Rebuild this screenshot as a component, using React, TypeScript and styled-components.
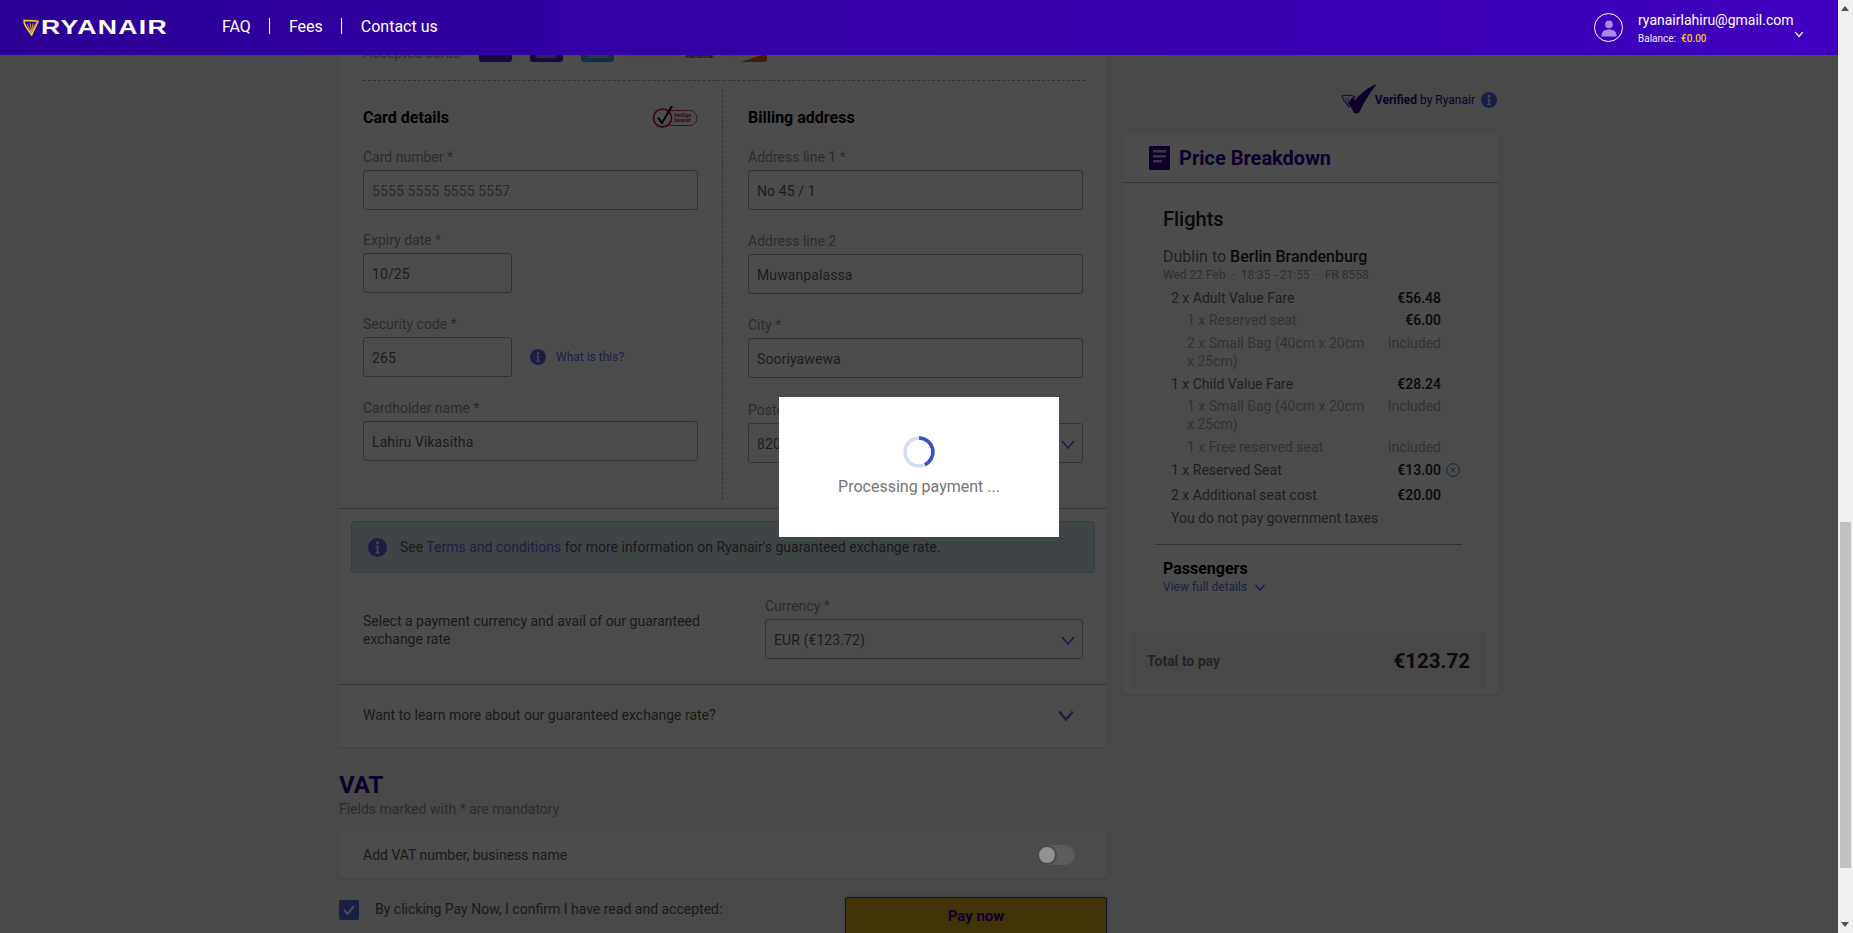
import React from "react";
import styled, { createGlobalStyle } from "styled-components";

const Global = createGlobalStyle`
  html, body { margin: 0; padding: 0; height: 100%; overflow: hidden; }
  body { font-family: Roboto, "Liberation Sans", sans-serif; font-size: 14px; color: #333; }
  * { box-sizing: border-box; }
`;

const BLUE = "#5568e0";
const TITLE = "#300090";

const Shell = styled.div`display: flex; width: 1853px; height: 933px; overflow: hidden;`;
const Viewport = styled.div`position: relative; flex: 1; min-width: 0; overflow: hidden; background: #f4f4f4;`;

const ScrollTrack = styled.div`width: 15px; height: 933px; background: #f1f1f1; position: relative; flex: none;`;
const ScrollArrow = styled.div<{ $down?: boolean }>`
  position: absolute; left: 3px; ${(p) => (p.$down ? "bottom: 6px;" : "top: 6px;")}
  width: 0; height: 0; border-left: 4.5px solid transparent; border-right: 4.5px solid transparent;
  ${(p) => (p.$down ? "border-top: 5px solid #505050;" : "border-bottom: 5px solid #505050;")}
`;
const ScrollThumb = styled.div`position: absolute; left: 2px; top: 522px; width: 11px; height: 346px; background: #c1c1c1;`;

const Header = styled.header`
  position: absolute; top: 0; left: 0; right: 0; height: 55px; z-index: 3;
  display: flex; align-items: center; color: #fff; padding-left: 23px;
  background: linear-gradient(90deg, #2c0096 0%, #3f00bf 100%);
`;
const Logo = styled.div`display: flex; align-items: center; gap: 2px; width: 199px; margin-top: -1px;`;
const LogoWord = styled.span`
  font-family: "Liberation Sans", sans-serif; font-weight: 700; font-size: 20px; letter-spacing: 1px; line-height: 20px; transform: scaleX(1.33); transform-origin: left center;
`;
const Nav = styled.nav`display: flex; align-items: center; margin-top: -3px;`;
const NavItem = styled.a`font-size: 16px; line-height: 17px; color: #fff;`;
const NavSep = styled.span`width: 1px; height: 16px; background: #fff; margin: 0 18.500px;`;
const User = styled.div`margin-left: auto; margin-right: 34px; display: flex; align-items: center; position: relative; width: 210px;`;
const Avatar = styled.div`width: 29px; height: 29px; border-radius: 50%; border: 1px solid #fff; display: flex; align-items: center; justify-content: center; margin-right: 15px; flex: none; overflow: hidden;`;
const UserText = styled.div`display: flex; flex-direction: column;`;
const Email = styled.div`font-size: 14px; line-height: 18px;`;
const Balance = styled.div`font-size: 10px; line-height: 12px; margin-top: 4px; color: #f2eaff;`;
const BalanceValue = styled.span`color: #f1c933; font-weight: 500; margin-left: 5px;`;
const UserChevron = styled.span`position: absolute; right: 0; top: 18px; display: flex;`;

const Columns = styled.div`display: flex; align-items: flex-start; padding: 40px 0 0 339px; gap: 16px;`;
const Main = styled.main`width: 768px; flex: none;`;
const Side = styled.aside`width: 376px; flex: none;`;

const Card = styled.section`background: #fff; box-shadow: 0 1px 2px rgba(0,0,0,.1);`;
const CardTop = styled(Card)`margin-top: -40px; padding-top: 40px;`;
const Accepted = styled.div`display: flex; align-items: center; height: 22px; padding-left: 24px;`;
const AcceptedLabel = styled.span`width: 116px; color: #999; font-size: 14px; margin-top: 3px;`;
const Chips = styled.div`display: flex; gap: 18px;`;
const Chip = styled.div<{ $bg: string }>`width: 33px; height: 22px; border-radius: 3px; background: ${(p) => p.$bg}; overflow: hidden; position: relative; box-shadow: 0 0 0 1px rgba(0,0,0,.03);`;
const ChipMark = styled.span<{ $c: string; $bottom?: number; $size?: number }>`position: absolute; left: 0; right: 0; bottom: ${(p) => p.$bottom ?? 3}px; text-align: center; font-size: ${(p) => p.$size ?? 5}px; font-weight: 500; line-height: 6px; color: ${(p) => p.$c};`;
const ChipCorner = styled.span`position: absolute; right: 0; bottom: 0; width: 0; height: 0; border-left: 26px solid transparent; border-bottom: 9px solid #e2681a;`;

const DashedLine = styled.div`height: 1px; margin: 18px 22px 0 24px; border-top: 1px dashed #a8a8a8;`;
const FormGrid = styled.div`display: grid; grid-template-columns: 384px 1fr; height: 410px; margin: 9px 0 8px;`;
const FormCol = styled.div<{ $right?: boolean }>`
  padding: 17px 24px 0 ${(p) => (p.$right ? "25px" : "24px")};
  ${(p) => (p.$right ? "" : "border-right: 1px dashed #a8a8a8;")}
`;
const TitleRow = styled.div`display: flex; justify-content: space-between; align-items: center; height: 20px; margin-bottom: 20px;`;
const FormTitle = styled.h3`margin: 1px 0 0; font-size: 16px; line-height: 20px; font-weight: 700; color: #000;`;
const Field = styled.div<{ $gap?: number }>`display: block; margin-bottom: ${(p) => p.$gap ?? 21}px;`;
const FieldLine = styled.div`display: flex; align-items: center;`;
const Label = styled.label`display: block; height: 20px; line-height: 20px; margin-bottom: 3px; font-size: 14px; color: #8f8f8f; white-space: nowrap;`;
const Input = styled.div<{ $muted?: boolean }>`
  position: relative; height: 40px; border: 1px solid #a6a6a6; border-radius: 3px; padding: 1px 8px 0;
  display: flex; align-items: center; justify-content: space-between;
  font-size: 14px; color: ${(p) => (p.$muted ? "#8a8a8a" : "#5c5c5c")}; letter-spacing: 0.1px;
  flex: 1;
`;
const SmallInput = styled(Input)`flex: none; width: 149px;`;
const Chevron = styled.span<{ $color?: string }>`display: flex; margin-right: -2px; color: ${(p) => p.$color ?? BLUE};`;
const LearnChevron = styled(Chevron)`margin-right: 2px;`;
const WhatIs = styled.a`display: flex; align-items: center; gap: 10px; margin-left: 18px; font-size: 12px; color: ${BLUE};`;

const HLine = styled.div`height: 1px; background: #bcbcbc;`;
const InfoBox = styled.div`
  display: flex; align-items: center; gap: 13px; height: 52px; margin: 12px 12px 0;
  padding-left: 16px; background: #d4e3ee; border: 1px solid #b3cbe5; border-radius: 3px; font-size: 14px; color: #555;
`;
const BlueLink = styled.a`color: ${BLUE};`;
const CurrencyRow = styled.div`display: flex; align-items: center; justify-content: space-between; padding: 23px 24px 25px;`;
const CurrencyText = styled.p`margin: 5px 0 0; width: 340px; font-size: 14px; line-height: 18px; color: #555;`;
const CurrencyField = styled.div`width: 318px;`;
const LearnRow = styled.div`display: flex; align-items: center; justify-content: space-between; height: 62px; padding: 0 30px 3px 24px; font-size: 14px; color: #555;`;

const VatTitle = styled.h2`margin: 23px 0 0; font-size: 24px; line-height: 30px; font-weight: 700; color: ${TITLE};`;
const VatSub = styled.p`margin: 0; font-size: 14px; line-height: 18px; color: #8f8f8f;`;
const VatCard = styled(Card)`display: flex; align-items: center; justify-content: space-between; height: 46px; margin-top: 14px; padding: 0 32px 0 24px; color: #555; font-size: 14px;`;
const Toggle = styled.div`width: 38px; height: 20px; border-radius: 10px; background: #5c5c5c; position: relative; z-index: 3;`;
const ToggleKnob = styled.span`position: absolute; left: 0; top: 0; width: 20px; height: 20px; border-radius: 50%; background: #929292; border: 2px solid #484848;`;
const ConfirmRow = styled.div`display: flex; align-items: flex-start; margin-top: 19px;`;
const Checkbox = styled.div`width: 20px; height: 20px; margin-top: 3px; border-radius: 2px; background: ${BLUE}; display: flex; align-items: center; justify-content: center; flex: none;`;
const ConfirmText = styled.span`margin: 3px 0 0 16px; line-height: 18px; font-size: 14px; color: #555; flex: 1;`;
const PayButton = styled.button`
  width: 262px; height: 60px; flex: none; border: 1px solid #33338c; border-radius: 3px;
  background: #d9b01c; color: ${TITLE}; font: 700 15px Roboto, sans-serif; padding: 0 0 22px;
  box-shadow: 0 0 3px rgba(60,80,255,.5);
`;

const Verified = styled.div`display: flex; align-items: center; justify-content: flex-end; height: 30px; margin: 45px 2px 0 0; font-size: 12px; color: ${TITLE};`;
const VerifiedBold = styled.b`font-weight: 700; margin-right: 3px;`;
const VerifiedIcon = styled.span`display: flex; margin-right: -4px; margin-top: -3px;`;
const VerifiedInfo = styled.span`display: flex; margin-left: 6px;`;
const PriceCard = styled(Card)`margin-top: 19px; padding-bottom: 7px;`;
const PriceHead = styled.div`display: flex; align-items: center; gap: 9px; height: 49px; padding-left: 26px; border-bottom: 1px solid #b3b3b3;`;
const PriceTitle = styled.h2`margin: 0; font-size: 20px; line-height: 24px; font-weight: 700; color: ${TITLE};`;
const PriceBody = styled.div`padding: 24px 0 0 40px;`;
const Flights = styled.h3`margin: 0; font-size: 20px; line-height: 24px; font-weight: 500; color: #222;`;
const Route = styled.div`margin-top: 17px; font-size: 16px; line-height: 18px; color: #666;`;
const RouteBold = styled.b`font-weight: 500; color: #222;`;
const RouteMeta = styled.div`margin: 2px 0 5px; font-size: 12px; line-height: 14px; color: #999;`;
const Row = styled.div<{ $sub?: boolean; $tall?: boolean }>`
  display: grid; grid-template-columns: 1fr 64px 24px; width: 294px; margin-left: 8px;
  padding: ${(p) => (p.$tall ? "3px 0 4.5px" : "2px 0")};
  font-size: 14px; line-height: 18.4px;
  color: ${(p) => (p.$sub ? "#a8a8a8" : "#666")};
`;
const RowLabel = styled.span<{ $sub?: boolean }>`padding: 0 6px 0 ${(p) => (p.$sub ? "16px" : "0")};`;
const RowNote = styled.span`grid-column: 1 / -1; white-space: nowrap;`;
const Amount = styled.span<{ $free?: boolean }>`text-align: right; white-space: nowrap; font-weight: ${(p) => (p.$free ? 400 : 500)}; color: ${(p) => (p.$free ? "#a8a8a8" : "#222")};`;
const RemoveIcon = styled.span`display: flex; align-items: center; justify-content: flex-end; padding-right: 5px;`;
const Rule = styled.div`height: 1px; background: #a8a8a8; margin: 15px 37px 0 -8px;`;
const Passengers = styled.h3`margin: 14px 0 0; font-size: 16px; line-height: 20px; font-weight: 700; color: #000;`;
const ViewDetails = styled.a`display: flex; align-items: center; gap: 7px; font-size: 12px; line-height: 17px; color: ${BLUE};`;
const TotalBox = styled.div`display: flex; align-items: center; justify-content: space-between; height: 55px; margin: 36px 13px 0 8px; padding: 3px 16px 0; background: #f1f1f1;`;
const TotalLabel = styled.span`font-size: 14px; font-weight: 700; color: #777;`;
const TotalValue = styled.span`font-size: 20.500px; font-weight: 700; color: #222;`;

const Overlay = styled.div`position: absolute; inset: 0; z-index: 2; background: rgba(0,0,0,.7); display: flex; align-items: center; justify-content: center;`;
const Modal = styled.div`width: 280px; height: 140px; background: #fff; display: flex; flex-direction: column; align-items: center; padding-top: 39px;`;
const Spinner = styled.div`width: 32px; height: 32px; display: flex;`;
const ModalText = styled.div`margin-top: 9px; font-size: 16px; line-height: 20px; color: #757575;`;

const Down = ({ size = 16, sw = 1.6, color = "currentColor" }: { size?: number; sw?: number; color?: string }) => (
  <svg width={size} height={size} viewBox="0 0 16 16" fill="none" stroke={color} strokeWidth={sw}>
    <path d="M2 5l6 7 6-7" />
  </svg>
);

const InfoIcon = ({ size = 16, color = BLUE }: { size?: number; color?: string }) => (
  <svg width={size} height={size} viewBox="0 0 16 16">
    <circle cx="8" cy="8" r="8" fill={color} />
    <circle cx="8" cy="4.2" r="1.2" fill="#fff" />
    <path d="M6.4 6.6h2.4v5.4h1v1H6.300v-1h1V7.600h-.9z" fill="#fff" />
  </svg>
);

const Harp = () => (
  <svg width="16" height="17" viewBox="0 0 16 17" fill="none" stroke="#f1c933">
    <path d="M1 1.500c4 .2 9 0 14 .8L8.600 16 2.800 7.500C1.800 6 1 4 1 1.500z" strokeWidth="1.600" />
    <path d="M4 5l4.400 9M7 4.200l1.600 9M10 4.400l-1.400 8M12.500 4.600l-3.700 8" strokeWidth=".8" />
  </svg>
);

const Person = () => (
  <svg width="20" height="20" viewBox="0 0 20 20" fill="#a78ce6">
    <circle cx="10" cy="6.400" r="3.800" />
    <path d="M2.500 17.500c0-4 3-6 7.500-6s7.500 2 7.500 6c0 .5-.5 1-1 1h-13c-.5 0-1-.5-1-1z" />
  </svg>
);

const Verisign = () => (
  <svg width="46" height="24" viewBox="0 0 46 24" fill="none">
    <rect x="12" y="5.500" width="33" height="15" rx="7.500" stroke="#b01040" strokeWidth=".8" />
    <circle cx="10.500" cy="13" r="9" fill="#fff" stroke="#b01040" strokeWidth="1.600" />
    <path d="M6 12.500l4 5.500L20 1" stroke="#000" strokeWidth="2" />
    <text x="22" y="12" fontSize="4.500" fontWeight="700" fontFamily="Roboto, sans-serif" fill="#b01040">VeriSign</text>
    <text x="22" y="17" fontSize="4.500" fontWeight="700" fontFamily="Roboto, sans-serif" fill="#b01040">Secured</text>
  </svg>
);

const VerifiedMark = () => (
  <svg width="40" height="30" viewBox="0 0 40 30">
    <path d="M3 12c4-1 9-1 13 .5L10 23 4.500 16z" fill="none" stroke="#4a18c0" strokeWidth="1.100" />
    <path d="M6 14l4 7M9 13.500l1.200 6.500M13 13.500l-2.500 6.500" stroke="#4a18c0" strokeWidth=".7" />
    <path d="M9.500 19c1.500-3 3-5 4.500-5.500 1 1 1.500 2 2 3C21 10 29 3 38 0c-5 6-12 16-17 27-1 2-3 3-5.500 2-2-2-3.500-7-6-10z" fill={TITLE} />
  </svg>
);

const DocIcon = () => (
  <svg width="21" height="24" viewBox="0 0 21 24">
    <rect width="21" height="24" rx="1" fill={TITLE} />
    <rect x="4" y="4" width="13" height="2.500" fill="#fff" opacity=".7" />
    <rect x="4" y="9" width="13" height="2.500" fill="#fff" opacity=".7" />
    <rect x="4" y="14" width="9" height="2.500" fill="#fff" opacity=".7" />
  </svg>
);

const RemoveSvg = () => (
  <svg width="14" height="14" viewBox="0 0 14 14" fill="none" stroke={BLUE} strokeWidth="1">
    <circle cx="7" cy="7" r="6.300" />
    <path d="M4.500 4.500l5 5M9.500 4.500l-5 5" />
  </svg>
);

const Check = () => (
  <svg width="14" height="12" viewBox="0 0 14 12" fill="none" stroke="#fff" strokeWidth="2">
    <path d="M2 6l3.500 4L12 2" />
  </svg>
);

const SpinnerSvg = () => (
  <svg width="32" height="32" viewBox="0 0 32 32" fill="none" strokeWidth="3.500">
    <circle cx="16" cy="16" r="14" stroke="#d3dcf5" />
    <path d="M16 2a14 14 0 0 1 6 26.600" stroke="#3550c8" />
  </svg>
);

export default function App() {
  return (
    <Shell>
      <Global />
      <Viewport>
        <Header>
          <Logo>
            <Harp />
            <LogoWord>RYANAIR</LogoWord>
          </Logo>
          <Nav>
            <NavItem>FAQ</NavItem>
            <NavSep />
            <NavItem>Fees</NavItem>
            <NavSep />
            <NavItem>Contact us</NavItem>
          </Nav>
          <User>
            <Avatar><Person /></Avatar>
            <UserText>
              <Email>ryanairlahiru@gmail.com</Email>
              <Balance>Balance:<BalanceValue>€0.00</BalanceValue></Balance>
            </UserText>
            <UserChevron><Down size={10} sw={2} color="#fff" /></UserChevron>
          </User>
        </Header>

        <Columns>
          <Main>
            <CardTop>
              <Accepted>
                <AcceptedLabel>Accepted cards</AcceptedLabel>
                <Chips>
                  <Chip $bg="#5a20d8" />
                  <Chip $bg="#5a20d8"><ChipMark $c="#ddd">business</ChipMark></Chip>
                  <Chip $bg="#3aa0d8"><ChipMark $c="#ddd">business</ChipMark></Chip>
                  <Chip $bg="#fff"><ChipMark $c="#111" $bottom={7} $size={7}>UATP</ChipMark></Chip>
                  <Chip $bg="#fff"><ChipMark $c="#222">international</ChipMark></Chip>
                  <Chip $bg="#fff"><ChipCorner /></Chip>
                </Chips>
              </Accepted>
              <DashedLine />
              <FormGrid>
                <FormCol>
                  <TitleRow>
                    <FormTitle>Card details</FormTitle>
                    <Verisign />
                  </TitleRow>
                  <Field $gap={20}>
                    <Label>Card number *</Label>
                    <Input $muted>5555 5555 5555 5557</Input>
                  </Field>
                  <Field>
                    <Label>Expiry date *</Label>
                    <SmallInput as="div">10/25</SmallInput>
                  </Field>
                  <Field>
                    <Label>Security code *</Label>
                    <FieldLine>
                      <SmallInput as="div">265</SmallInput>
                      <WhatIs><InfoIcon />What is this?</WhatIs>
                    </FieldLine>
                  </Field>
                  <Field>
                    <Label>Cardholder name *</Label>
                    <Input>Lahiru Vikasitha</Input>
                  </Field>
                </FormCol>
                <FormCol $right>
                  <TitleRow>
                    <FormTitle>Billing address</FormTitle>
                  </TitleRow>
                  <Field>
                    <Label>Address line 1 *</Label>
                    <Input>No 45 / 1</Input>
                  </Field>
                  <Field>
                    <Label>Address line 2</Label>
                    <Input>Muwanpalassa</Input>
                  </Field>
                  <Field $gap={22}>
                    <Label>City *</Label>
                    <Input>Sooriyawewa</Input>
                  </Field>
                  <Field>
                    <Label>Postcode *</Label>
                    <Input>820<Chevron><Down /></Chevron></Input>
                  </Field>
                </FormCol>
              </FormGrid>
              <HLine />
              <InfoBox>
                <InfoIcon size={19} />
                <span>See <BlueLink>Terms and conditions</BlueLink> for more information on Ryanair's guaranteed exchange rate.</span>
              </InfoBox>
              <CurrencyRow>
                <CurrencyText>Select a payment currency and avail of our guaranteed exchange rate</CurrencyText>
                <CurrencyField>
                  <Label>Currency *</Label>
                  <Input>EUR (€123.72)<Chevron><Down /></Chevron></Input>
                </CurrencyField>
              </CurrencyRow>
              <HLine />
              <LearnRow>
                Want to learn more about our guaranteed exchange rate?
                <LearnChevron><Down size={18} sw={2.2} /></LearnChevron>
              </LearnRow>
            </CardTop>
            <VatTitle>VAT</VatTitle>
            <VatSub>Fields marked with * are mandatory</VatSub>
            <VatCard>
              Add VAT number, business name
              <Toggle><ToggleKnob /></Toggle>
            </VatCard>
            <ConfirmRow>
              <Checkbox><Check /></Checkbox>
              <ConfirmText>By clicking Pay Now, I confirm I have read and accepted:</ConfirmText>
              <PayButton>Pay now</PayButton>
            </ConfirmRow>
          </Main>
          <Side>
            <Verified>
              <VerifiedIcon><VerifiedMark /></VerifiedIcon>
              <VerifiedBold>Verified</VerifiedBold> by Ryanair
              <VerifiedInfo><InfoIcon /></VerifiedInfo>
            </Verified>
            <PriceCard>
              <PriceHead>
                <DocIcon />
                <PriceTitle>Price Breakdown</PriceTitle>
              </PriceHead>
              <PriceBody>
                <Flights>Flights</Flights>
                <Route>Dublin to <RouteBold>Berlin Brandenburg</RouteBold></Route>
                <RouteMeta>Wed 22 Feb &nbsp;·&nbsp; 18:35 - 21:55 &nbsp;·&nbsp; FR 8558</RouteMeta>
                <Row><RowLabel>2 x Adult Value Fare</RowLabel><Amount>€56.48</Amount></Row>
                <Row $sub><RowLabel $sub>1 x Reserved seat</RowLabel><Amount>€6.00</Amount></Row>
                <Row $sub><RowLabel $sub>2 x Small Bag (40cm x 20cm x 25cm)</RowLabel><Amount $free>Included</Amount></Row>
                <Row><RowLabel>1 x Child Value Fare</RowLabel><Amount>€28.24</Amount></Row>
                <Row $sub><RowLabel $sub>1 x Small Bag (40cm x 20cm x 25cm)</RowLabel><Amount $free>Included</Amount></Row>
                <Row $sub><RowLabel $sub>1 x Free reserved seat</RowLabel><Amount $free>Included</Amount></Row>
                <Row $tall><RowLabel>1 x Reserved Seat</RowLabel><Amount>€13.00</Amount><RemoveIcon><RemoveSvg /></RemoveIcon></Row>
                <Row><RowLabel>2 x Additional seat cost</RowLabel><Amount>€20.00</Amount></Row>
                <Row><RowNote>You do not pay government taxes</RowNote></Row>
                <Rule />
                <Passengers>Passengers</Passengers>
                <ViewDetails>View full details <Down size={12} sw={2} color={BLUE} /></ViewDetails>
              </PriceBody>
              <TotalBox>
                <TotalLabel>Total to pay</TotalLabel>
                <TotalValue>€123.72</TotalValue>
              </TotalBox>
            </PriceCard>
          </Side>
        </Columns>

        <Overlay>
          <Modal>
            <Spinner><SpinnerSvg /></Spinner>
            <ModalText>Processing payment ...</ModalText>
          </Modal>
        </Overlay>
      </Viewport>
      <ScrollTrack>
        <ScrollArrow />
        <ScrollThumb />
        <ScrollArrow $down />
      </ScrollTrack>
    </Shell>
  );
}
